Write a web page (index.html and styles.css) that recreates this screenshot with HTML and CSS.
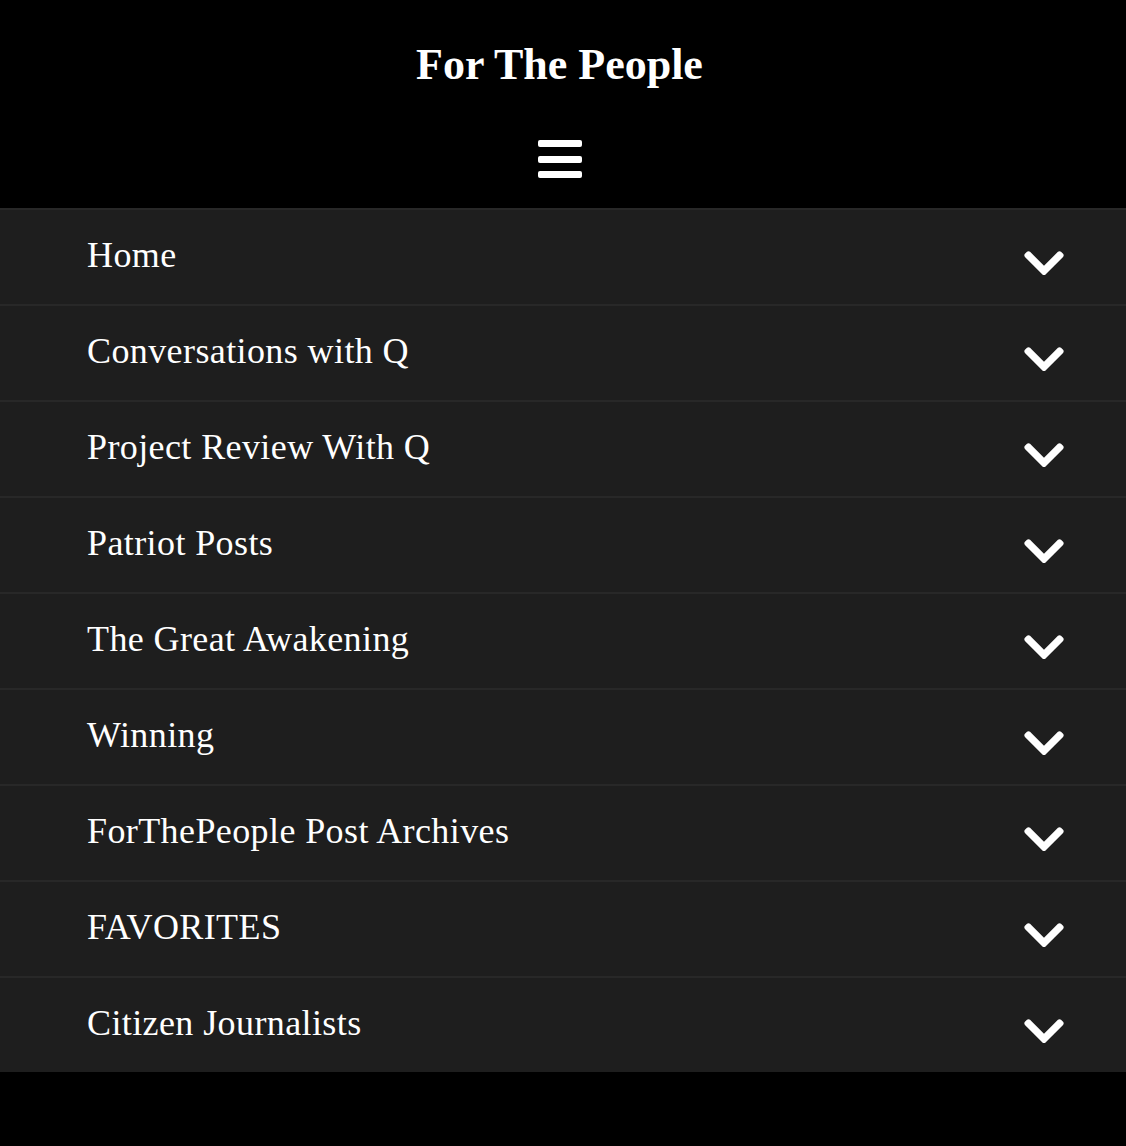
FILE: index.html
```html
<!DOCTYPE html>
<html lang="en">
<head>
<meta charset="utf-8">
<title>For The People</title>
<link rel="stylesheet" href="styles.css">
</head>
<body>
<header class="site-header">
  <h1 class="site-title">For The People</h1>
  <button class="menu-toggle" aria-label="Menu">
    <span class="bar"></span><span class="bar"></span><span class="bar"></span>
  </button>
</header>
<nav class="menu">
  <ul class="menu-list">
    <li class="menu-item"><a href="#">Home</a><svg class="chev" viewBox="5 122 438 266"><path d="M207.029 381.476L12.686 187.132c-9.373-9.373-9.373-24.569 0-33.941l22.667-22.667c9.357-9.357 24.522-9.375 33.901-.04L224 284.505l154.745-154.021c9.379-9.335 24.544-9.317 33.901.04l22.667 22.667c9.373 9.373 9.373 24.569 0 33.941L240.971 381.476c-9.373 9.372-24.569 9.372-33.942 0z"/></svg></li>
    <li class="menu-item"><a href="#">Conversations with Q</a><svg class="chev" viewBox="5 122 438 266"><path d="M207.029 381.476L12.686 187.132c-9.373-9.373-9.373-24.569 0-33.941l22.667-22.667c9.357-9.357 24.522-9.375 33.901-.04L224 284.505l154.745-154.021c9.379-9.335 24.544-9.317 33.901.04l22.667 22.667c9.373 9.373 9.373 24.569 0 33.941L240.971 381.476c-9.373 9.372-24.569 9.372-33.942 0z"/></svg></li>
    <li class="menu-item"><a href="#">Project Review With Q</a><svg class="chev" viewBox="5 122 438 266"><path d="M207.029 381.476L12.686 187.132c-9.373-9.373-9.373-24.569 0-33.941l22.667-22.667c9.357-9.357 24.522-9.375 33.901-.04L224 284.505l154.745-154.021c9.379-9.335 24.544-9.317 33.901.04l22.667 22.667c9.373 9.373 9.373 24.569 0 33.941L240.971 381.476c-9.373 9.372-24.569 9.372-33.942 0z"/></svg></li>
    <li class="menu-item"><a href="#">Patriot Posts</a><svg class="chev" viewBox="5 122 438 266"><path d="M207.029 381.476L12.686 187.132c-9.373-9.373-9.373-24.569 0-33.941l22.667-22.667c9.357-9.357 24.522-9.375 33.901-.04L224 284.505l154.745-154.021c9.379-9.335 24.544-9.317 33.901.04l22.667 22.667c9.373 9.373 9.373 24.569 0 33.941L240.971 381.476c-9.373 9.372-24.569 9.372-33.942 0z"/></svg></li>
    <li class="menu-item"><a href="#">The Great Awakening</a><svg class="chev" viewBox="5 122 438 266"><path d="M207.029 381.476L12.686 187.132c-9.373-9.373-9.373-24.569 0-33.941l22.667-22.667c9.357-9.357 24.522-9.375 33.901-.04L224 284.505l154.745-154.021c9.379-9.335 24.544-9.317 33.901.04l22.667 22.667c9.373 9.373 9.373 24.569 0 33.941L240.971 381.476c-9.373 9.372-24.569 9.372-33.942 0z"/></svg></li>
    <li class="menu-item"><a href="#">Winning</a><svg class="chev" viewBox="5 122 438 266"><path d="M207.029 381.476L12.686 187.132c-9.373-9.373-9.373-24.569 0-33.941l22.667-22.667c9.357-9.357 24.522-9.375 33.901-.04L224 284.505l154.745-154.021c9.379-9.335 24.544-9.317 33.901.04l22.667 22.667c9.373 9.373 9.373 24.569 0 33.941L240.971 381.476c-9.373 9.372-24.569 9.372-33.942 0z"/></svg></li>
    <li class="menu-item"><a href="#">ForThePeople Post Archives</a><svg class="chev" viewBox="5 122 438 266"><path d="M207.029 381.476L12.686 187.132c-9.373-9.373-9.373-24.569 0-33.941l22.667-22.667c9.357-9.357 24.522-9.375 33.901-.04L224 284.505l154.745-154.021c9.379-9.335 24.544-9.317 33.901.04l22.667 22.667c9.373 9.373 9.373 24.569 0 33.941L240.971 381.476c-9.373 9.372-24.569 9.372-33.942 0z"/></svg></li>
    <li class="menu-item"><a href="#">FAVORITES</a><svg class="chev" viewBox="5 122 438 266"><path d="M207.029 381.476L12.686 187.132c-9.373-9.373-9.373-24.569 0-33.941l22.667-22.667c9.357-9.357 24.522-9.375 33.901-.04L224 284.505l154.745-154.021c9.379-9.335 24.544-9.317 33.901.04l22.667 22.667c9.373 9.373 9.373 24.569 0 33.941L240.971 381.476c-9.373 9.372-24.569 9.372-33.942 0z"/></svg></li>
    <li class="menu-item"><a href="#">Citizen Journalists</a><svg class="chev" viewBox="5 122 438 266"><path d="M207.029 381.476L12.686 187.132c-9.373-9.373-9.373-24.569 0-33.941l22.667-22.667c9.357-9.357 24.522-9.375 33.901-.04L224 284.505l154.745-154.021c9.379-9.335 24.544-9.317 33.901.04l22.667 22.667c9.373 9.373 9.373 24.569 0 33.941L240.971 381.476c-9.373 9.372-24.569 9.372-33.942 0z"/></svg></li>
  </ul>
</nav>
</body>
</html>
```
FILE: styles.css
```css
html, body {
  margin: 0;
  padding: 0;
  background: #000;
}
body {
  font-family: "Liberation Serif", "Times New Roman", serif;
  color: #fff;
}
.site-header {
  display: flex;
  flex-direction: column;
  align-items: center;
  padding: 43px 7px 30px 0;
}
.site-title {
  margin: 0;
  font-size: 44px;
  line-height: 44px;
  font-weight: bold;
  color: #fff;
}
.menu-toggle {
  margin-top: 53px;
  width: 44px;
  height: 38px;
  padding: 0;
  border: 0;
  background: transparent;
  display: flex;
  flex-direction: column;
  justify-content: space-between;
}
.bar {
  display: block;
  width: 44px;
  height: 7px;
  border-radius: 2px;
  background: #fff;
}
.menu {
  background: #1e1e1e;
}
.menu-list {
  list-style: none;
  margin: 0;
  padding: 0;
}
.menu-item {
  display: flex;
  align-items: center;
  justify-content: space-between;
  height: 94px;
  border-top: 2px solid #282828;
  padding: 0 62px 0 87px;
}
.menu-item a {
  color: #fff;
  text-decoration: none;
  font-size: 36px;
  line-height: 40px;
  letter-spacing: 0.4px;
  margin-top: -4px;
}
.chev {
  width: 40px;
  height: 24px;
  fill: #fff;
  margin-top: 12px;
}
```
